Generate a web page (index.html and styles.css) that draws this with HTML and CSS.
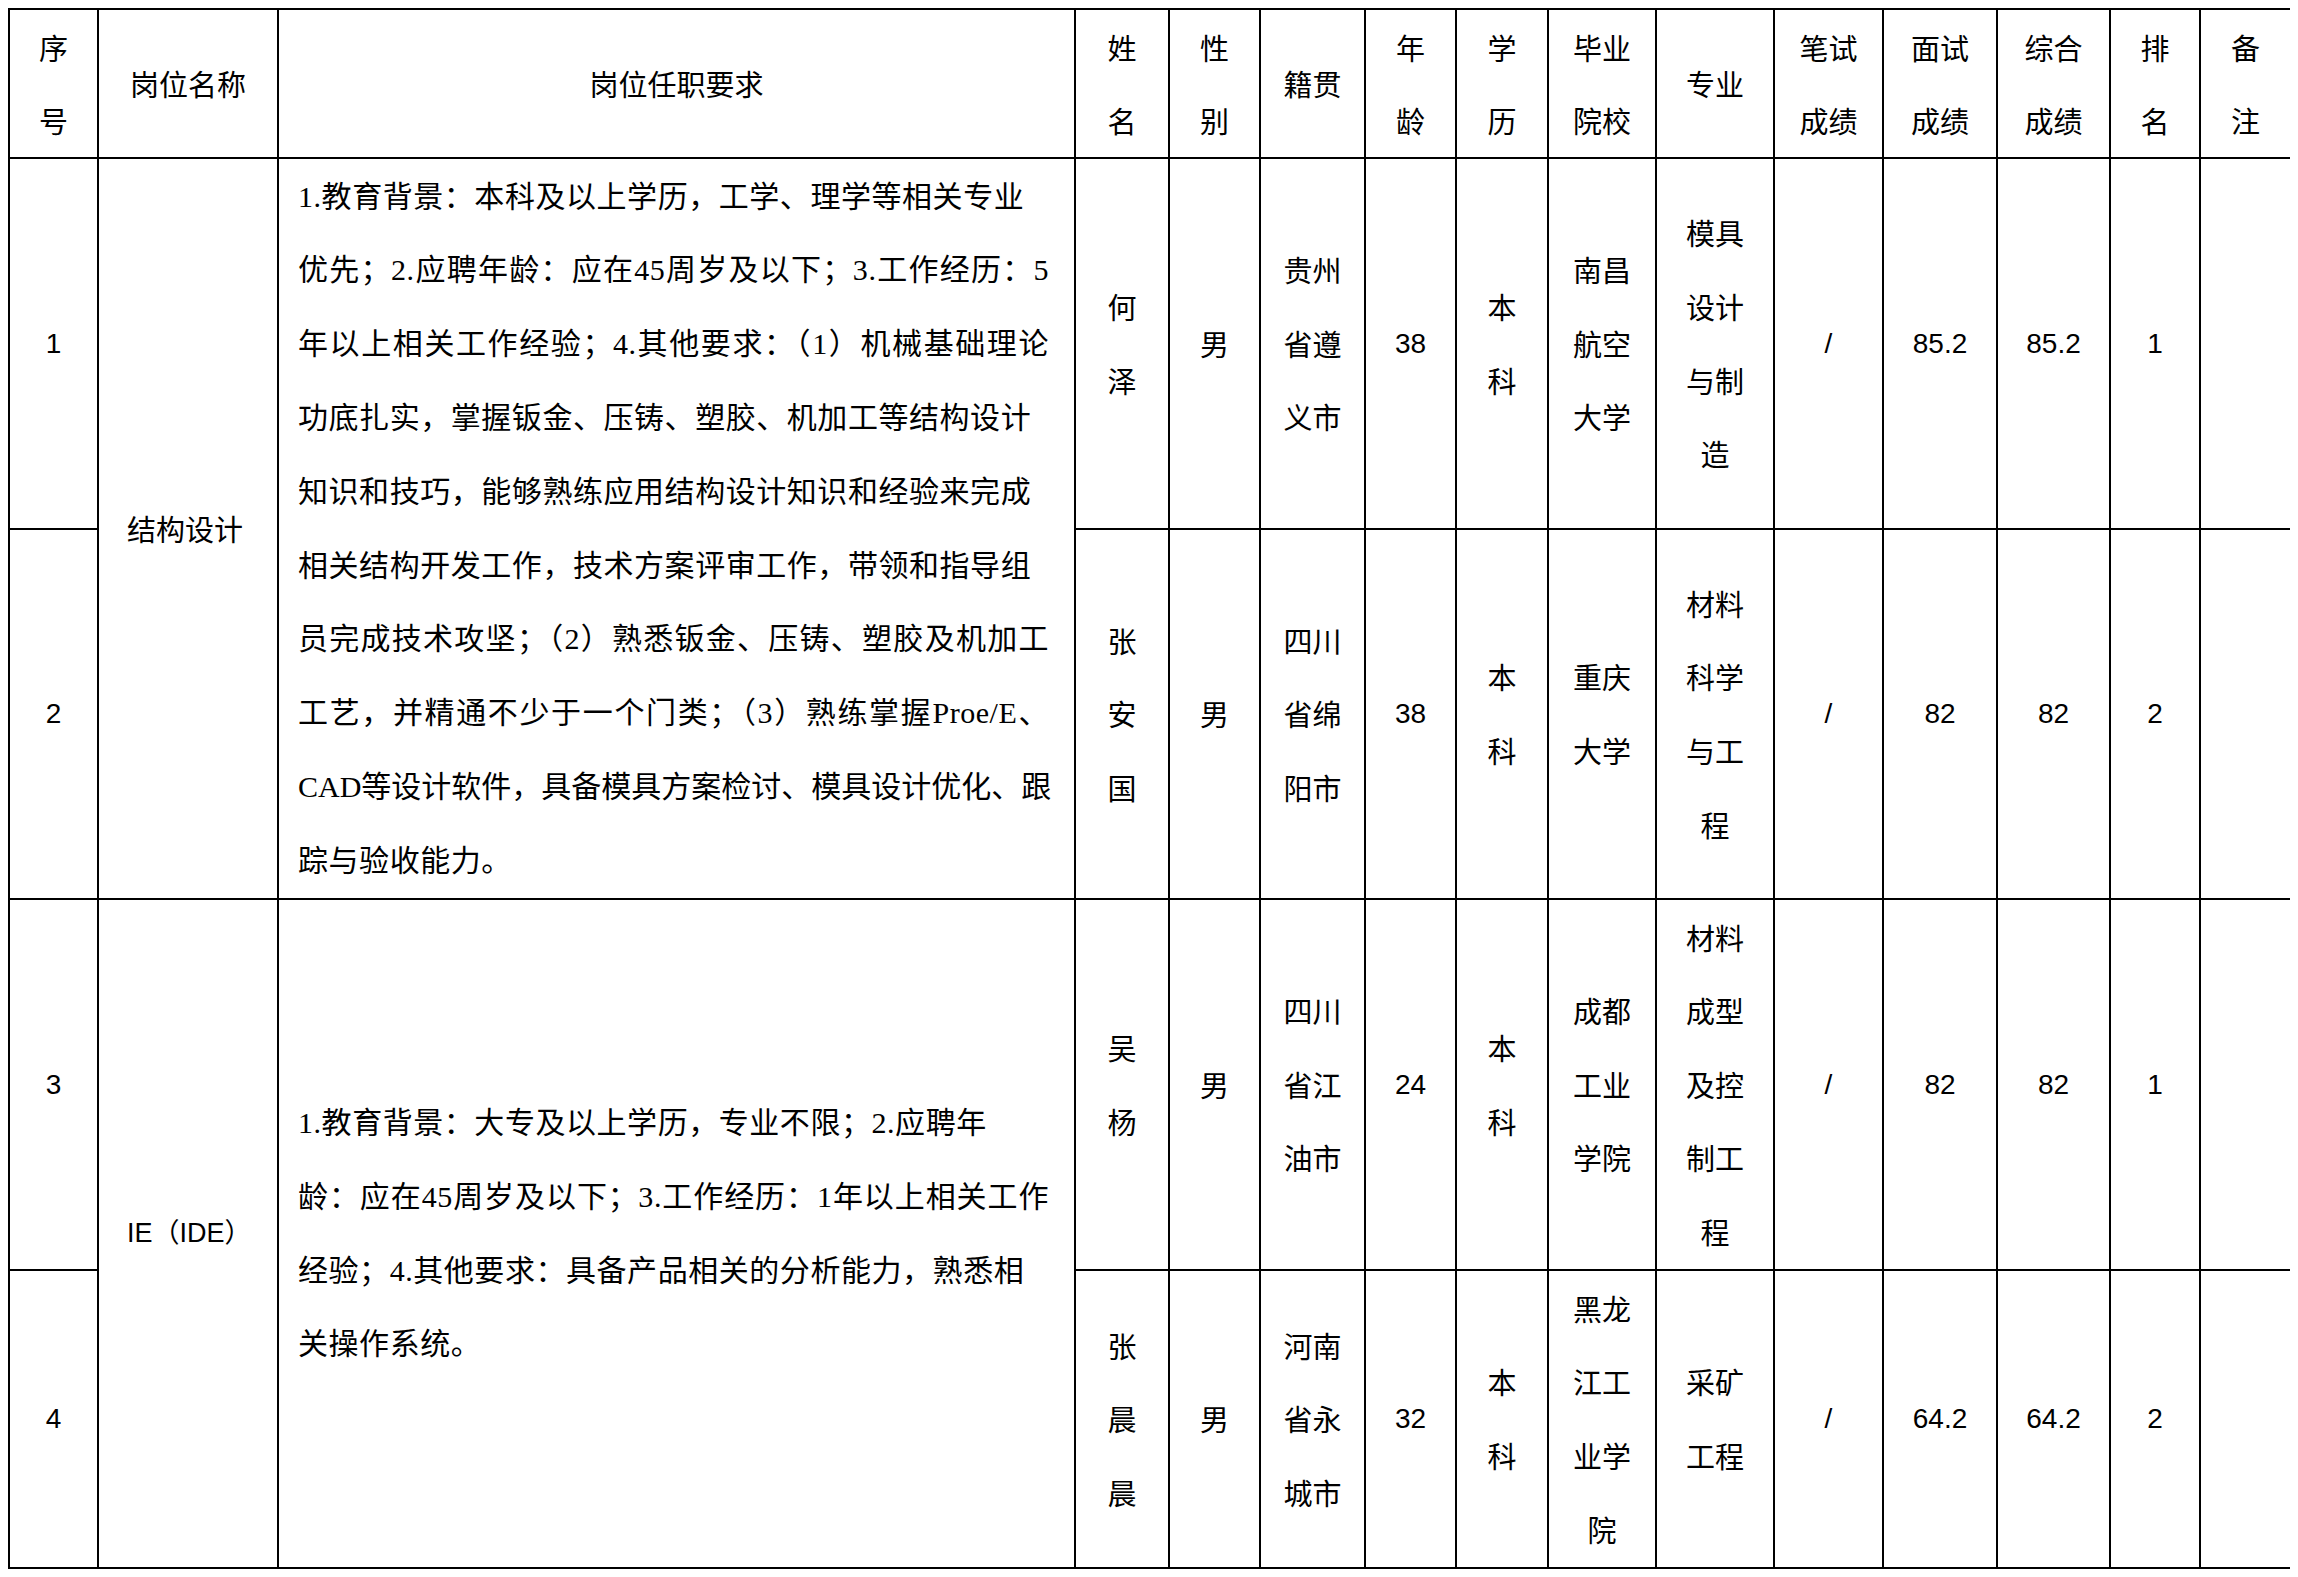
FILE: index.html
```html
<!DOCTYPE html>
<html lang="zh-CN">
<head>
<meta charset="utf-8">
<title>岗位人员成绩表</title>
<link rel="stylesheet" href="styles.css">
</head>
<body>
<table class="roster">
  <colgroup>
    <col class="c-no">
    <col class="c-post">
    <col class="c-req">
    <col class="c-name">
    <col class="c-sex">
    <col class="c-origin">
    <col class="c-age">
    <col class="c-edu">
    <col class="c-school">
    <col class="c-major">
    <col class="c-written">
    <col class="c-interview">
    <col class="c-total">
    <col class="c-rank">
    <col class="c-note">
  </colgroup>
  <thead>
    <tr class="row-head">
      <th>序号</th>
      <th>岗位名称</th>
      <th>岗位任职要求</th>
      <th>姓名</th>
      <th>性别</th>
      <th>籍贯</th>
      <th>年龄</th>
      <th>学历</th>
      <th>毕业院校</th>
      <th>专业</th>
      <th>笔试成绩</th>
      <th>面试成绩</th>
      <th>综合成绩</th>
      <th>排名</th>
      <th>备注</th>
    </tr>
  </thead>
  <tbody>
    <tr class="row-a">
      <td class="num">1</td>
      <td class="post" rowspan="2">结构设计</td>
      <td class="req" rowspan="2"><span class="ln">1.教育背景：本科及以上学历，工学、理学等相关专业</span><span class="ln fill">优先；2.应聘年龄：应在45周岁及以下；3.工作经历：5</span><span class="ln fill">年以上相关工作经验；4.其他要求：（1）机械基础理论</span><span class="ln">功底扎实，掌握钣金、压铸、塑胶、机加工等结构设计</span><span class="ln">知识和技巧，能够熟练应用结构设计知识和经验来完成</span><span class="ln">相关结构开发工作，技术方案评审工作，带领和指导组</span><span class="ln fill">员完成技术攻坚；（2）熟悉钣金、压铸、塑胶及机加工</span><span class="ln fill">工艺，并精通不少于一个门类；（3）熟练掌握Proe/E、</span><span class="ln fill tight">CAD等设计软件，具备模具方案检讨、模具设计优化、跟</span><span class="ln">踪与验收能力。</span></td>
      <td>何泽</td>
      <td>男</td>
      <td>贵州省遵义市</td>
      <td class="num">38</td>
      <td>本科</td>
      <td>南昌航空大学</td>
      <td>模具设计与制造</td>
      <td class="num">/</td>
      <td class="num">85.2</td>
      <td class="num">85.2</td>
      <td class="num">1</td>
      <td></td>
    </tr>
    <tr class="row-b">
      <td class="num">2</td>
      <td>张安国</td>
      <td>男</td>
      <td>四川省绵阳市</td>
      <td class="num">38</td>
      <td>本科</td>
      <td>重庆大学</td>
      <td>材料科学与工程</td>
      <td class="num">/</td>
      <td class="num">82</td>
      <td class="num">82</td>
      <td class="num">2</td>
      <td></td>
    </tr>
    <tr class="row-c">
      <td class="num">3</td>
      <td class="post latin" rowspan="2">IE（IDE）</td>
      <td class="req" rowspan="2"><span class="ln">1.教育背景：大专及以上学历，专业不限；2.应聘年</span><span class="ln fill">龄：应在45周岁及以下；3.工作经历：1年以上相关工作</span><span class="ln">经验；4.其他要求：具备产品相关的分析能力，熟悉相</span><span class="ln">关操作系统。</span></td>
      <td>吴杨</td>
      <td>男</td>
      <td>四川省江油市</td>
      <td class="num">24</td>
      <td>本科</td>
      <td>成都工业学院</td>
      <td>材料成型及控制工程</td>
      <td class="num">/</td>
      <td class="num">82</td>
      <td class="num">82</td>
      <td class="num">1</td>
      <td></td>
    </tr>
    <tr class="row-d">
      <td class="num">4</td>
      <td>张晨晨</td>
      <td>男</td>
      <td>河南省永城市</td>
      <td class="num">32</td>
      <td>本科</td>
      <td>黑龙江工业学院</td>
      <td>采矿工程</td>
      <td class="num">/</td>
      <td class="num">64.2</td>
      <td class="num">64.2</td>
      <td class="num">2</td>
      <td></td>
    </tr>
  </tbody>
</table>
</body>
</html>
```

FILE: styles.css
```css
html, body {
  background: #ffffff;
}

body {
  margin: 8px;
  color: #000000;
  font-family: "Noto Sans CJK SC", sans-serif;
}

.roster {
  border-collapse: separate;
  border-spacing: 0;
  table-layout: fixed;
  width: 2284px;
  border-top: 2px solid #000;
  border-left: 2px solid #000;
  font-family: "Noto Sans CJK SC", sans-serif;
  font-size: 29px;
  color: #000;
}

.c-no { width: 89px; }
.c-post { width: 180px; }
.c-req { width: 797px; }
.c-name { width: 94px; }
.c-sex { width: 91px; }
.c-origin { width: 105px; }
.c-age { width: 91px; }
.c-edu { width: 92px; }
.c-school { width: 108px; }
.c-major { width: 118px; }
.c-written { width: 109px; }
.c-interview { width: 114px; }
.c-total { width: 113px; }
.c-rank { width: 90px; }
.c-note { width: 91px; }

.roster th,
.roster td {
  box-sizing: border-box;
  border-right: 2px solid #000;
  border-bottom: 2px solid #000;
  padding: 0 18px;
  text-align: center;
  vertical-align: middle;
  line-height: 73.6px;
  font-weight: normal;
}

.roster th {
  line-height: 73px;
}

.row-head { height: 149px; }
.row-a { height: 371px; }
.row-b { height: 370px; }
.row-c { height: 371px; }
.row-d { height: 298px; }

.roster td.num {
  font-family: "Liberation Sans", "Noto Sans CJK SC", sans-serif;
  font-size: 28px;
  padding: 0 4px;
}

.roster td.post {
  text-align: left;
  padding: 0 0 0 28px;
}

.roster td.latin {
  font-family: "Liberation Sans", "Noto Sans CJK SC", sans-serif;
  font-size: 27px;
}

.roster td.req {
  text-align: left;
  padding: 0 25px 0 19px;
  white-space: nowrap;
  font-family: "Liberation Serif", "Noto Sans CJK SC", serif;
  font-size: 30px;
  letter-spacing: 0.55px;
  line-height: 73.8px;
}

.ln {
  display: block;
}

.ln.fill {
  text-align: justify;
  text-align-last: justify;
}

.ln.tight {
  letter-spacing: 0;
}
```
